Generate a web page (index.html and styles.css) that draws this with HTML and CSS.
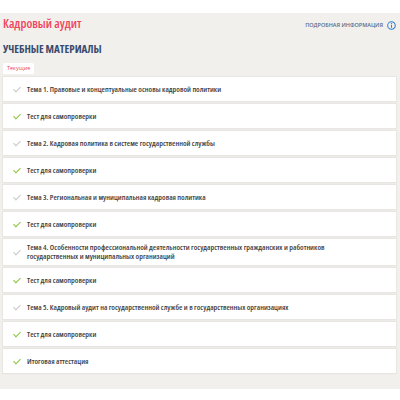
FILE: index.html
```html
<!DOCTYPE html>
<html lang="ru">
<head>
    <meta charset="UTF-8">
    <title>Кадровый аудит</title>
    <link rel="stylesheet" href="styles.css">
</head>
<body>
    <div class="page">
        <div class="header">
            <h1 class="course-title">Кадровый аудит</h1>
            <a class="info-link" href="#">ПОДРОБНАЯ ИНФОРМАЦИЯ
                <svg class="info-icon" viewBox="0 0 16 16" width="9" height="9">
                    <circle cx="8" cy="8" r="6.8" fill="none" stroke="#2f7fd0" stroke-width="1.8"/>
                    <rect x="7.1" y="7" width="1.8" height="5" fill="#2f7fd0"/>
                    <circle cx="8" cy="4.8" r="1.1" fill="#2f7fd0"/>
                </svg>
            </a>
        </div>
        <h2 class="section-title">УЧЕБНЫЕ МАТЕРИАЛЫ</h2>
        <div class="tabs">
            <span class="tab active">Текущие</span>
        </div>

        <ul class="materials">
            <li class="item"><span class="check"></span><span class="label">Тема 1. Правовые и концептуальные основы кадровой политики</span></li>
            <li class="item done"><span class="check"></span><span class="label">Тест для самопроверки</span></li>
            <li class="item"><span class="check"></span><span class="label">Тема 2. Кадровая политика в системе государственной службы</span></li>
            <li class="item done"><span class="check"></span><span class="label">Тест для самопроверки</span></li>
            <li class="item"><span class="check"></span><span class="label">Тема 3. Региональная и муниципальная кадровая политика</span></li>
            <li class="item done"><span class="check"></span><span class="label">Тест для самопроверки</span></li>
            <li class="item"><span class="check"></span><span class="label">Тема 4. Особенности профессиональной деятельности государственных гражданских и работников государственных и муниципальных организаций</span></li>
            <li class="item done"><span class="check"></span><span class="label">Тест для самопроверки</span></li>
            <li class="item"><span class="check"></span><span class="label">Тема 5. Кадровый аудит на государственной службе и в государственных организациях</span></li>
            <li class="item done"><span class="check"></span><span class="label">Тест для самопроверки</span></li>
            <li class="item done"><span class="check"></span><span class="label">Итоговая аттестация</span></li>
        </ul>
    </div>
</body>
</html>
```

FILE: styles.css
```css
body {
    margin: 0;
    background-color: #ffffff;
    font-family: 'Open Sans', sans-serif;
}
.page {
    margin-top: 13px;
    background-color: #f1f0ed;
    padding: 1px 4px 13px 3px;
}
.header {
    display: flex;
    justify-content: space-between;
    align-items: center;
    height: 18px;
}
.course-title {
    margin: 0;
    font-size: 12.5px;
    font-weight: 600;
    font-stretch: 75%;
    color: #f0435a;
}
.info-link {
    display: flex;
    align-items: center;
    gap: 4px;
    margin-top: 4px;
    font-size: 5.5px;
    font-weight: 600;
    color: #5b6b88;
    text-decoration: none;
}
.section-title {
    margin: 9px 0 0;
    font-size: 11px;
    font-weight: 700;
    font-stretch: 75%;
    color: #3a4b6c;
    line-height: 16px;
}
.tabs {
    display: flex;
    margin-top: 6px;
}
.tab {
    background-color: #ffffff;
    color: #f0435a;
    font-size: 5.5px;
    padding: 2px 4px;
    border-radius: 2px 2px 0 0;
    line-height: 7px;
}
.materials {
    list-style: none;
    margin: 3px 0 0;
    padding: 0;
}
.item {
    display: flex;
    align-items: center;
    min-height: 16px;
    padding: 4px 30px 4px 9px;
    margin-bottom: 3px;
    background-color: #ffffff;
    box-shadow: 0 0 0 1px #e7e6e2, 0 1px 1px #dcdbd7;
    font-size: 7.8px;
    font-weight: 600;
    font-stretch: 87.5%;
    line-height: 9px;
    color: #3d3d3d;
}
.check {
    flex: none;
    width: 3px;
    height: 6px;
    margin: 0 8px 2px 3px;
    border-right: 1px solid #c8c8c8;
    border-bottom: 1px solid #c8c8c8;
    transform: rotate(45deg);
}
.item.done .check {
    border-color: #8cc63f;
}
```
